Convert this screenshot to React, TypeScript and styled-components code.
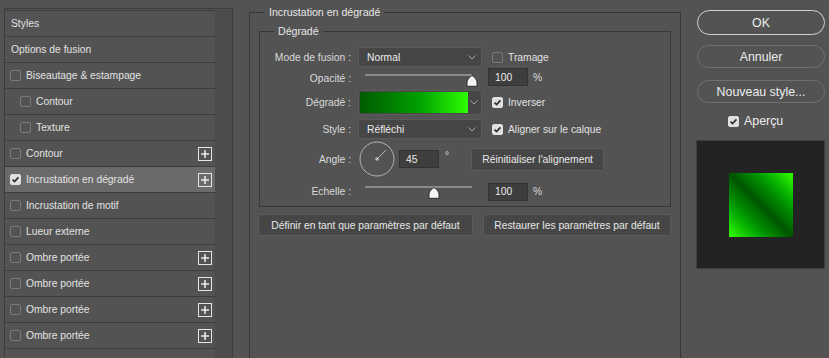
import styled, { createGlobalStyle } from "styled-components";

const GlobalStyle = createGlobalStyle`
  html, body {
    margin: 0;
    padding: 0;
    background: #535353;
  }
  body {
    font-family: "Liberation Sans", Arial, sans-serif;
    font-size: 10.3px;
    color: #dadada;
  }
`;

const Dialog = styled.div`
  display: flex;
  width: 829px;
  height: 358px;
  overflow: hidden;
`;

/* ---------- left: list of layer styles ---------- */

const StylesPanel = styled.div`
  display: flex;
  box-sizing: border-box;
  width: 229px;
  margin: 8px 0 0 4px;
  padding-top: 1px;
  border: 1px solid #3c3c3c;
  border-bottom: none;
`;

const StyleList = styled.ul`
  list-style: none;
  margin: 0;
  padding: 0;
  width: 210px;
  border-top: 1px solid #3c3c3c;
`;

const StyleRow = styled.li<{ $selected?: boolean; $indent?: number }>`
  display: flex;
  align-items: center;
  gap: 5px;
  height: 25px;
  padding: 0 3px 0 ${({ $indent }) => $indent ?? 5}px;
  border-bottom: 1px solid #3c3c3c;
  background: ${({ $selected }) => ($selected ? "#6a6a6a" : "transparent")};
  color: #e2e2e2;
`;

const ScrollTrack = styled.div`
  flex: 1;
  background: #4c4c4c;
`;

const PlusButton = styled.span`
  margin-left: auto;
  width: 14px;
  height: 14px;
  display: flex;
  align-items: center;
  justify-content: center;
  box-sizing: border-box;
  border: 1px solid #e4e4e4;
`;

const Box = styled.span<{ $checked?: boolean }>`
  flex: none;
  display: inline-flex;
  align-items: center;
  justify-content: center;
  box-sizing: border-box;
  width: 11px;
  height: 11px;
  border-radius: 2px;
  border: 1px solid ${({ $checked }) => ($checked ? "#e0e0e0" : "#7a7a7a")};
  background: ${({ $checked }) => ($checked ? "#e0e0e0" : "transparent")};
`;

function Check({ checked }: { checked?: boolean }) {
  return (
    <Box $checked={checked}>
      {checked && (
        <svg width="9" height="9" viewBox="0 0 9 9">
          <path d="M1.6 4.6 L3.6 6.6 L7.4 2.4" fill="none" stroke="#2e2e2e" strokeWidth="1.7" />
        </svg>
      )}
    </Box>
  );
}

function Plus() {
  return (
    <PlusButton>
      <svg width="10" height="10" viewBox="0 0 10 10">
        <path d="M5 1 V9 M1 5 H9" stroke="#e8e8e8" strokeWidth="1.6" />
      </svg>
    </PlusButton>
  );
}

/* ---------- middle: gradient overlay settings ---------- */

const MiddleColumn = styled.div`
  display: flex;
  flex-direction: column;
  width: 432px;
  margin-left: 16px;
`;

const Group = styled.fieldset<{ $outer?: boolean }>`
  margin: 5px 0 0;
  padding: ${({ $outer }) => ($outer ? "0 9px" : "9px 0 5px")};
  border: 1px solid #383838;
  border-bottom: ${({ $outer }) => ($outer ? "none" : "1px solid #383838")};
  min-inline-size: 0;
  flex: ${({ $outer }) => ($outer ? 1 : "none")};
`;

const Legend = styled.legend<{ $offset: number }>`
  margin-left: ${({ $offset }) => $offset}px;
  padding: 0 4px;
  line-height: 14px;
  color: #e6e6e6;
  font-size: 10.6px;
`;

const FieldRow = styled.div<{ $h: number; $mt?: number }>`
  display: flex;
  align-items: center;
  height: ${({ $h }) => $h}px;
  margin-top: ${({ $mt }) => $mt ?? 0}px;
`;

const FieldLabel = styled.span<{ $dy?: number }>`
  flex: none;
  width: 91px;
  margin-right: 7px;
  padding-top: ${({ $dy }) => $dy ?? 0}px;
  text-align: right;
`;

const Select = styled.div`
  display: flex;
  align-items: center;
  justify-content: space-between;
  box-sizing: border-box;
  width: 124px;
  height: 20px;
  padding: 0 5px 0 8px;
  background: #464646;
  border: 1px solid #5b5b5b;
  border-radius: 3px;
  color: #ececec;
`;

const Chevron = () => (
  <svg width="8" height="5" viewBox="0 0 8 5">
    <path d="M0.5 0.5 L4 4 L7.5 0.5" fill="none" stroke="#a8a8a8" strokeWidth="1" />
  </svg>
);

const SliderBox = styled.div<{ $top: number }>`
  position: relative;
  align-self: flex-start;
  width: 124px;
  height: 100%;
  padding-top: ${({ $top }) => $top}px;
  box-sizing: border-box;
`;

const Track = styled.div`
  margin-left: 7px;
  width: 107px;
  height: 2px;
  background: #8a8a8a;
`;

const Thumb = styled.svg`
  position: absolute;
`;

function Slider({ ratio, top }: { ratio: number; top: number }) {
  return (
    <SliderBox $top={top}>
      <Track />
      <Thumb
        width="12"
        height="12"
        viewBox="0 0 12 12"
        style={{ left: 7 + ratio * 107 - 6, top: top + 1 }}
      >
        <path d="M6 0.8 C7.5 0.8 11 5 11 7 L11 11.3 L1 11.3 L1 7 C1 5 4.5 0.8 6 0.8 Z" fill="#f4f4f4" stroke="#2c2c2c" strokeWidth="1" />
      </Thumb>
    </SliderBox>
  );
}

const NumberInput = styled.div<{ $ml: number }>`
  box-sizing: border-box;
  width: 40px;
  height: 18px;
  margin-left: ${({ $ml }) => $ml}px;
  padding-left: 6px;
  display: flex;
  align-items: center;
  background: #3e3e3e;
  border: 1px solid #333;
  color: #ececec;
`;

const Unit = styled.span`
  margin-left: 5px;
`;

const Option = styled.span`
  display: flex;
  align-items: center;
  gap: 5px;
  margin-left: 10px;
  color: #e2e2e2;
`;

const GradientPicker = styled.div`
  display: flex;
  box-sizing: border-box;
  width: 124px;
  height: 25px;
  padding: 1px;
  background: #464646;
  border: 1px solid #5b5b5b;
  border-radius: 3px;
`;

const GradientBar = styled.div`
  width: 108px;
  background: linear-gradient(to right, #005a00, #00a000 55%, #2dff00);
`;

const GradientMenu = styled.div`
  flex: 1;
  display: flex;
  align-items: center;
  justify-content: center;
`;

const Dial = styled.svg`
  margin-left: 1px;
  flex: none;
`;

const Degree = styled.span`
  margin: -8px 0 0 6px;
`;

const PanelButton = styled.div<{ $w: number; $h: number; $ml?: number }>`
  box-sizing: border-box;
  width: ${({ $w }) => $w}px;
  height: ${({ $h }) => $h}px;
  margin-left: ${({ $ml }) => $ml ?? 0}px;
  display: flex;
  align-items: center;
  justify-content: center;
  background: #464646;
  border: 1px solid #5c5c5c;
  border-radius: 3px;
  color: #e8e8e8;
`;

const ButtonRow = styled.div`
  display: flex;
  gap: 10px;
  margin: 7px 0 0 -1px;
`;

/* ---------- right: dialog buttons & preview ---------- */

const RightColumn = styled.div`
  display: flex;
  flex-direction: column;
  width: 129px;
  margin-left: 16px;
  padding-top: 10px;
`;

const PillButton = styled.div<{ $primary?: boolean; $h: number; $mt?: number }>`
  box-sizing: border-box;
  width: 128px;
  height: ${({ $h }) => $h}px;
  margin-top: ${({ $mt }) => $mt ?? 0}px;
  display: flex;
  align-items: center;
  justify-content: center;
  border-radius: 13px;
  border: ${({ $primary }) => ($primary ? "1.5px solid #d2d2d2" : "1px solid #707070")};
  font-size: 12.4px;
  color: #ececec;
`;

const PreviewToggle = styled.div`
  display: flex;
  align-items: center;
  gap: 5px;
  height: 20px;
  margin: 8px 0 0 31px;
  font-size: 12.4px;
  color: #ececec;
`;

const Preview = styled.div`
  box-sizing: border-box;
  width: 129px;
  height: 129px;
  margin: 9px 0 0 -1px;
  display: flex;
  align-items: center;
  justify-content: center;
  background: #232323;
  border: 1px solid #3f3f3f;
`;

const Swatch = styled.div`
  width: 64px;
  height: 64px;
  background: linear-gradient(45deg, #33ff00 0%, #00a500 25%, #005400 50%, #00a500 75%, #33ff00 100%);
`;

const layerStyles = [
  { name: "Contour", checked: false, plus: true },
  { name: "Incrustation en dégradé", checked: true, plus: true, selected: true },
  { name: "Incrustation de motif", checked: false },
  { name: "Lueur externe", checked: false },
  { name: "Ombre portée", checked: false, plus: true },
  { name: "Ombre portée", checked: false, plus: true },
  { name: "Ombre portée", checked: false, plus: true },
  { name: "Ombre portée", checked: false, plus: true },
];

export default function App() {
  const opacity = 100;
  const scale = 100;

  return (
    <Dialog>
      <GlobalStyle />

      <StylesPanel>
        <StyleList>
          <StyleRow $indent={6}>Styles</StyleRow>
          <StyleRow $indent={6}>Options de fusion</StyleRow>
          <StyleRow>
            <Check /> Biseautage &amp; estampage
          </StyleRow>
          <StyleRow $indent={15}>
            <Check /> Contour
          </StyleRow>
          <StyleRow $indent={15}>
            <Check /> Texture
          </StyleRow>
          {layerStyles.map((s, i) => (
            <StyleRow key={i} $selected={s.selected}>
              <Check checked={s.checked} /> {s.name}
              {s.plus && <Plus />}
            </StyleRow>
          ))}
        </StyleList>
        <ScrollTrack />
      </StylesPanel>

      <MiddleColumn>
        <Group $outer>
          <Legend $offset={6}>Incrustation en dégradé</Legend>
          <Group>
            <Legend $offset={14}>Dégradé</Legend>

            <FieldRow $h={20}>
              <FieldLabel>Mode de fusion :</FieldLabel>
              <Select>
                Normal <Chevron />
              </Select>
              <Option>
                <Check /> Tramage
              </Option>
            </FieldRow>

            <FieldRow $h={20}>
              <FieldLabel $dy={3}>Opacité :</FieldLabel>
              <Slider ratio={opacity / 100} top={7} />
              <NumberInput $ml={6}>{opacity}</NumberInput>
              <Unit>%</Unit>
            </FieldRow>

            <FieldRow $h={25} $mt={3}>
              <FieldLabel>Dégradé :</FieldLabel>
              <GradientPicker>
                <GradientBar />
                <GradientMenu>
                  <Chevron />
                </GradientMenu>
              </GradientPicker>
              <Option>
                <Check checked /> Inverser
              </Option>
            </FieldRow>

            <FieldRow $h={20} $mt={4}>
              <FieldLabel>Style :</FieldLabel>
              <Select>
                Réfléchi <Chevron />
              </Select>
              <Option>
                <Check checked /> Aligner sur le calque
              </Option>
            </FieldRow>

            <FieldRow $h={36} $mt={2}>
              <FieldLabel>Angle :</FieldLabel>
              <Dial width="36" height="36" viewBox="0 0 36 36">
                <circle cx="18" cy="18" r="17" fill="none" stroke="#b4b4b4" strokeWidth="1" />
                <path d="M18 18 L27 9" stroke="#b4b4b4" strokeWidth="1" />
                <circle cx="18" cy="18" r="1.8" fill="#bdbdbd" />
              </Dial>
              <NumberInput $ml={4}>45</NumberInput>
              <Degree>°</Degree>
              <PanelButton $w={133} $h={23} $ml={22}>
                Réinitialiser l'alignement
              </PanelButton>
            </FieldRow>

            <FieldRow $h={19} $mt={5}>
              <FieldLabel>Echelle :</FieldLabel>
              <Slider ratio={(scale - 10) / 140} top={4} />
              <NumberInput $ml={6}>{scale}</NumberInput>
              <Unit>%</Unit>
            </FieldRow>
          </Group>

          <ButtonRow>
            <PanelButton $w={215} $h={22}>
              Définir en tant que paramètres par défaut
            </PanelButton>
            <PanelButton $w={188} $h={22}>
              Restaurer les paramètres par défaut
            </PanelButton>
          </ButtonRow>
        </Group>
      </MiddleColumn>

      <RightColumn>
        <PillButton $primary $h={25}>
          OK
        </PillButton>
        <PillButton $h={23} $mt={10}>
          Annuler
        </PillButton>
        <PillButton $h={23} $mt={12}>
          Nouveau style...
        </PillButton>
        <PreviewToggle>
          <Check checked /> Aperçu
        </PreviewToggle>
        <Preview>
          <Swatch />
        </Preview>
      </RightColumn>
    </Dialog>
  );
}
